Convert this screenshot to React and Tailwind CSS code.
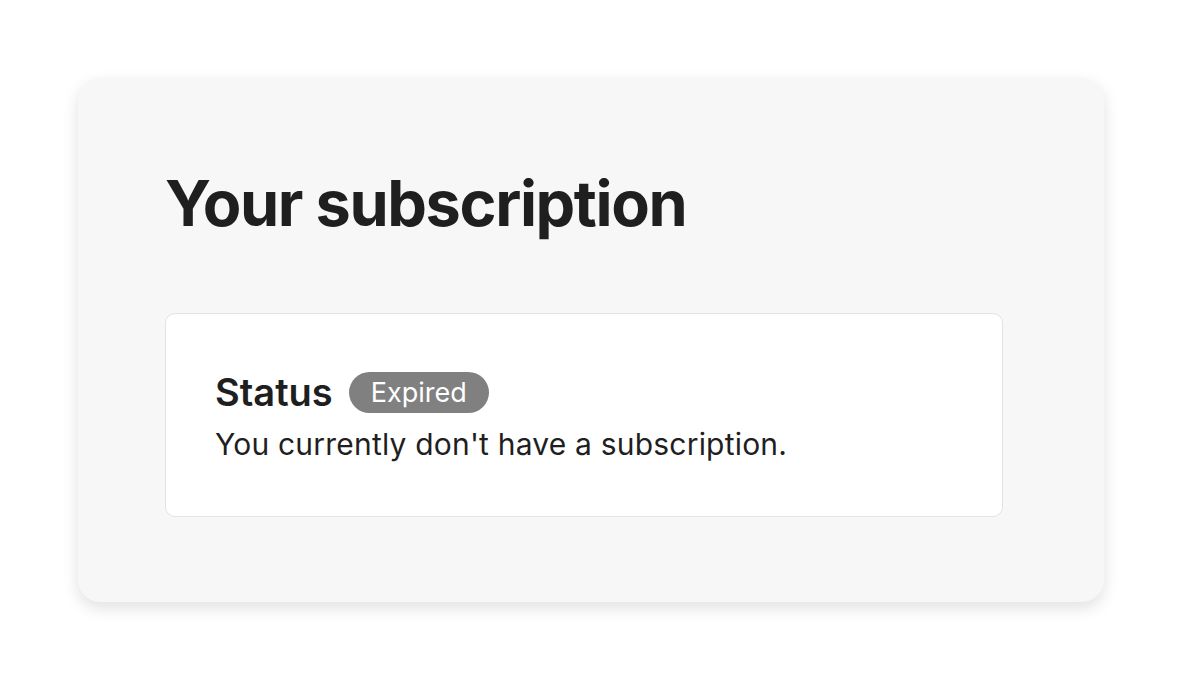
export default function App() {
  return (
    <div className="min-h-screen bg-white pt-[78px] pl-[78px]" style={{ fontFamily: "Inter, 'Noto Sans', sans-serif" }}>
      <div className="w-[1026px] h-[524px] rounded-[22px] bg-[#f7f7f7] shadow-[0_6px_16px_rgba(0,0,0,0.12)] pt-[89px] px-[87px]">
        <h1 className="text-[63px] leading-[72px] font-bold text-[#1f1f1f] tracking-[-1.4px]">Your subscription</h1>
        <div className="mt-[74px] w-[838px] h-[204px] bg-white border border-[#e3e3e3] rounded-[10px] pt-[56px] px-[49px]">
          <div className="flex items-center gap-[16px]">
            <span className="text-[38px] leading-[44px] font-semibold text-[#1f1f1f]">Status</span>
            <span className="h-[41px] px-[22px] rounded-full bg-[#808080] text-white text-[27px] leading-[41px]">Expired</span>
          </div>
          <p className="mt-[12px] text-[30px] leading-[36px] tracking-[0.2px] text-[#1f1f1f]">You currently don't have a subscription.</p>
        </div>
      </div>
    </div>
  );
}
